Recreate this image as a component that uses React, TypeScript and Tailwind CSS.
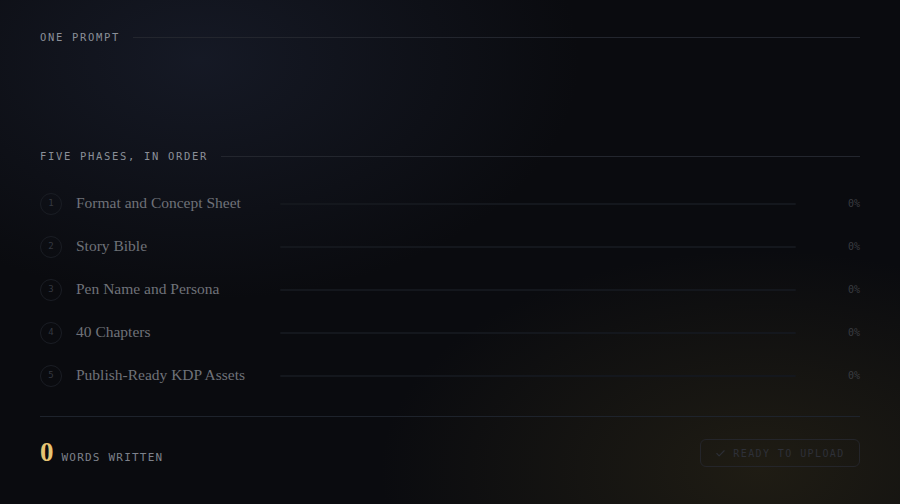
import React from 'react';
import { Check } from 'lucide-react';

const phases = [
  'Format and Concept Sheet',
  'Story Bible',
  'Pen Name and Persona',
  '40 Chapters',
  'Publish-Ready KDP Assets',
];

const mono = "font-['DejaVu_Sans_Mono','Liberation_Mono',monospace]";
const serif = "font-['Liberation_Serif','Times_New_Roman',serif]";

const SectionLabel: React.FC<{ text: string }> = ({ text }) => (
  <div className="flex items-center gap-[13px] h-3">
    <span className={`${mono} text-[10.5px] tracking-[0.16em] text-[#8b8f98] whitespace-nowrap leading-none pt-px`}>
      {text}
    </span>
    <div className="flex-1 h-px bg-[#23262e]"></div>
  </div>
);

const App: React.FC = () => {
  return (
    <div className="relative w-[900px] h-[504px] overflow-hidden bg-[#0a0b0f]">
      {/* glows */}
      <div className="absolute inset-0 bg-[radial-gradient(ellipse_380px_240px_at_200px_60px,rgba(38,46,70,0.4),transparent)]"></div>
      <div className="absolute inset-0 bg-[radial-gradient(ellipse_380px_220px_at_760px_470px,rgba(70,60,28,0.35),transparent)]"></div>

      <div className="relative px-10 pt-[31px]">
        <SectionLabel text="ONE PROMPT" />

        <div className="mt-[107px]">
          <SectionLabel text="FIVE PHASES, IN ORDER" />
        </div>

        <div className="mt-[20px] flex flex-col">
          {phases.map((p, i) => (
            <div key={p} className="flex items-center h-[43px]">
              <div className="w-[22px] h-[22px] rounded-full border border-[#1a1d24] flex items-center justify-center">
                <span className={`${mono} text-[9px] text-[#353941] leading-none`}>{i + 1}</span>
              </div>
              <div className={`${serif} ml-[14px] w-[204px] text-[15.5px] text-[#6f7279] whitespace-nowrap -mt-px`}>{p}</div>
              <div className="flex-1 h-[2px] bg-[#14171d] rounded-full"></div>
              <div className={`${mono} w-[64px] text-right text-[10px] text-[#3a3c41]`}>0%</div>
            </div>
          ))}
        </div>

        <div className="mt-[19px] h-px bg-[#1e232c]"></div>

        <div className="mt-[22px] flex items-center justify-between h-[28px]">
          <div className="flex items-baseline gap-[8px]">
            <span className={`${serif} text-[27px] font-bold text-[#e6c473] leading-none`}>0</span>
            <span className={`${mono} text-[11px] tracking-[0.11em] text-[#7d818b]`}>WORDS WRITTEN</span>
          </div>
          <div className="w-[160px] h-[28px] rounded-md border border-[#24252a] flex items-center justify-center gap-[7px]">
            <Check size={11} strokeWidth={2.5} className="text-[#2c2e35]" />
            <span className={`${mono} text-[10px] tracking-[0.14em] text-[#2e3038]`}>READY TO UPLOAD</span>
          </div>
        </div>
      </div>
    </div>
  );
};

export default App;
